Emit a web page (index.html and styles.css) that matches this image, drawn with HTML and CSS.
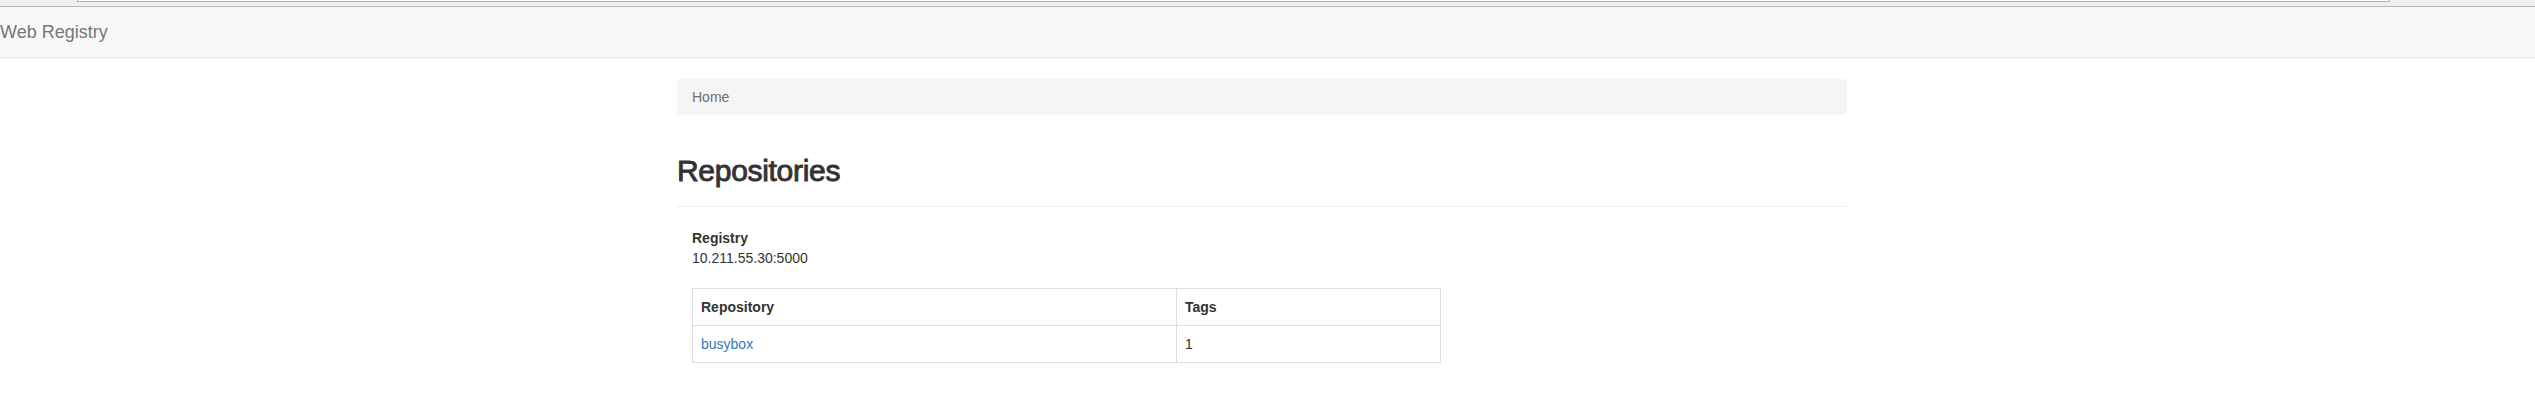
FILE: index.html
```html
<!DOCTYPE html>
<html>
<head>
<meta charset="utf-8">
<title>Web Registry</title>
<link rel="stylesheet" href="styles.css">
</head>
<body>
<div class="chrome"><div class="chrome-field"></div></div>
<nav class="navbar"><span class="brand">Web Registry</span></nav>
<div class="page">
  <div class="container">
    <ol class="breadcrumb"><li>Home</li></ol>
    <div class="page-header"><h2>Repositories</h2></div>
    <div class="content">
      <div class="registry">
        <div class="label">Registry</div>
        <div class="value">10.211.55.30:5000</div>
      </div>
      <table class="repos">
        <colgroup><col class="col-repo"><col class="col-tags"></colgroup>
        <thead>
          <tr><th>Repository</th><th>Tags</th></tr>
        </thead>
        <tbody>
          <tr><td><a href="#">busybox</a></td><td>1</td></tr>
        </tbody>
      </table>
    </div>
  </div>
</div>
</body>
</html>
```

FILE: styles.css
```css
html, body {
  margin: 0;
  padding: 0;
  background: #fff;
}
body {
  font-family: "Liberation Sans", Arial, sans-serif;
  font-size: 14px;
  line-height: 20px;
  color: #333;
}
.chrome {
  height: 6px;
  background: #efefef;
  border-bottom: 1px solid #b7b7b7;
  display: flex;
}
.chrome-field {
  margin-left: 77px;
  width: 2311px;
  height: 1px;
  background: #fff;
  border: 1px solid #b0b0b0;
  border-top: none;
}
.navbar {
  height: 50px;
  background: #f8f8f8;
  border-bottom: 1px solid #e7e7e7;
  box-sizing: content-box;
  display: flex;
  align-items: flex-start;
}
.brand {
  padding-top: 15px;
  font-size: 18px;
  line-height: 20px;
  color: #777;
}
.page {
  padding-right: 11px;
}
.container {
  width: 1170px;
  margin: 0 auto;
}
.breadcrumb {
  list-style: none;
  margin: 21px 0 0;
  padding: 8px 15px;
  background: #f5f5f5;
  border-radius: 4px;
  color: #6f6f6f;
}
.page-header {
  margin-top: 39px;
  padding-bottom: 9px;
  border-bottom: 1px solid #eee;
}
.page-header h2 {
  margin: 0 0 10px;
  font-size: 30px;
  line-height: 33px;
  font-weight: 500;
  color: #333;
  letter-spacing: -0.3px;
  -webkit-text-stroke: 0.9px #333;
}
.content {
  padding: 0 15px;
}
.registry {
  margin-top: 21px;
}
.label {
  font-weight: bold;
}
.repos {
  margin-top: 20px;
  border-collapse: collapse;
  table-layout: fixed;
  width: 749px;
}
.col-repo {
  width: 484px;
}
.repos th, .repos td {
  border: 1px solid #ddd;
  padding: 8px;
  text-align: left;
  line-height: 20px;
  vertical-align: top;
}
.repos th {
  font-weight: bold;
}
.repos a {
  color: #337ab7;
  text-decoration: none;
}
```
